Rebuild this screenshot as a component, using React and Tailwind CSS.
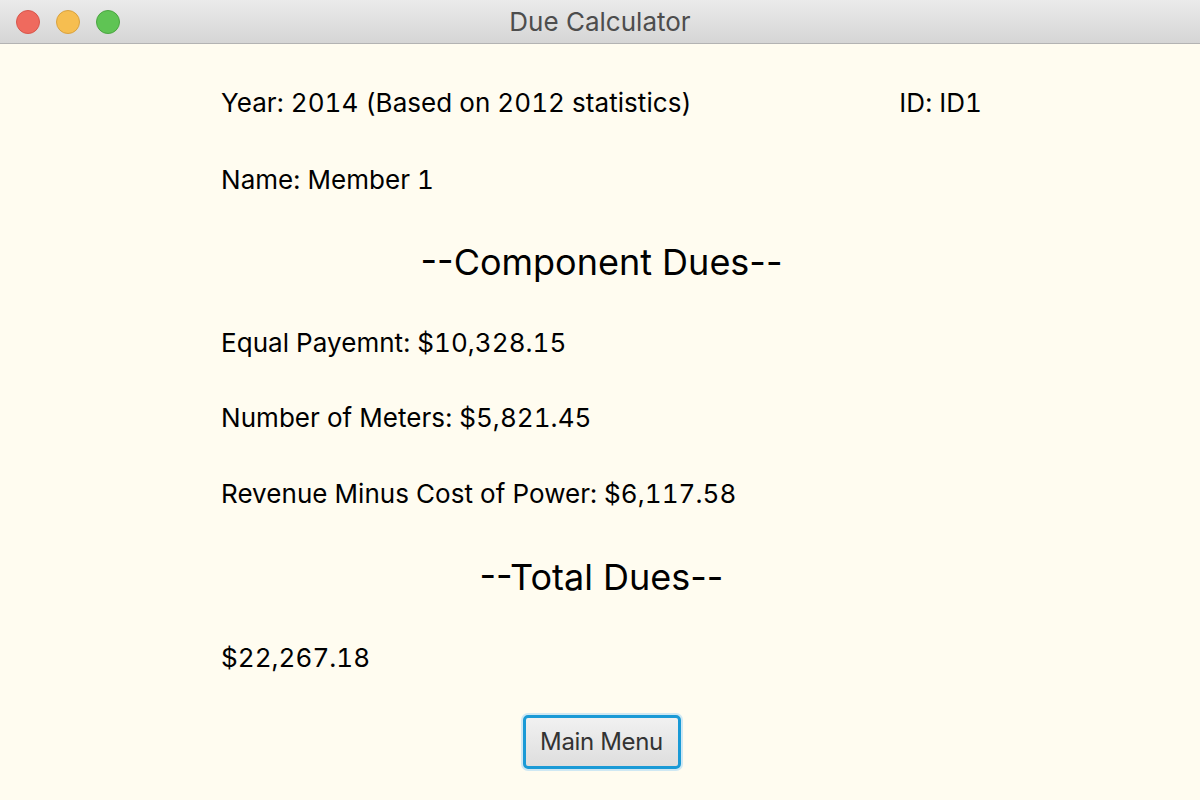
export default function App() {
  const font = { fontFamily: 'Inter, "Noto Sans", sans-serif' };
  return (
    <div className="w-[1200px] h-[800px] flex flex-col bg-[#fffcf0] overflow-hidden" style={font}>
      <div className="h-[44px] flex items-center relative bg-gradient-to-b from-[#ebebeb] to-[#d5d5d5] border-b border-[#b3b3b3] shrink-0">
        <div className="flex items-center gap-[16px] pl-[16px]">
          <div className="w-[24px] h-[24px] rounded-full bg-[#ef6a5e] border border-[#d8564b]" />
          <div className="w-[24px] h-[24px] rounded-full bg-[#f6be50] border border-[#d9a23f]" />
          <div className="w-[24px] h-[24px] rounded-full bg-[#5fc454] border border-[#4ba541]" />
        </div>
        <div className="absolute inset-0 flex items-center justify-center text-[26px] text-[#4d4d4d] tracking-[0px]">Due Calculator</div>
      </div>
      <div className="flex-1 flex flex-col pl-[221px] pr-[218px] text-black text-[26px] tracking-[0.05px] tabular-nums">
        <div className="flex justify-between mt-[40px] h-[36px] items-center">
          <span>Year: 2014 (Based on 2012 statistics)</span>
          <span>ID: ID1</span>
        </div>
        <div className="mt-[41px] h-[36px] flex items-center">Name: Member 1</div>
        <div className="mt-[45px] h-[40px] flex items-center justify-center text-[36px] tracking-[0px] normal-nums">--Component Dues--</div>
        <div className="mt-[42px] h-[36px] flex items-center">Equal Payemnt: $10,328.15</div>
        <div className="mt-[39px] h-[36px] flex items-center">Number of Meters: $5,821.45</div>
        <div className="mt-[40px] h-[36px] flex items-center">Revenue Minus Cost of Power: $6,117.58</div>
        <div className="mt-[46px] h-[40px] flex items-center justify-center text-[36px] tracking-[0px] normal-nums">--Total Dues--</div>
        <div className="mt-[42px] h-[36px] flex items-center">$22,267.18</div>
        <div className="mt-[40px] flex justify-center">
          <button className="w-[158px] h-[54px] rounded-[5px] border-[3px] border-[#1a9ad6] bg-gradient-to-b from-[#f1f1f1] to-[#dedede] text-[24px] text-[#333] tracking-[-0.3px] shadow-[0_0_0_2px_#cfe8f3]">Main Menu</button>
        </div>
      </div>
    </div>
  );
}
